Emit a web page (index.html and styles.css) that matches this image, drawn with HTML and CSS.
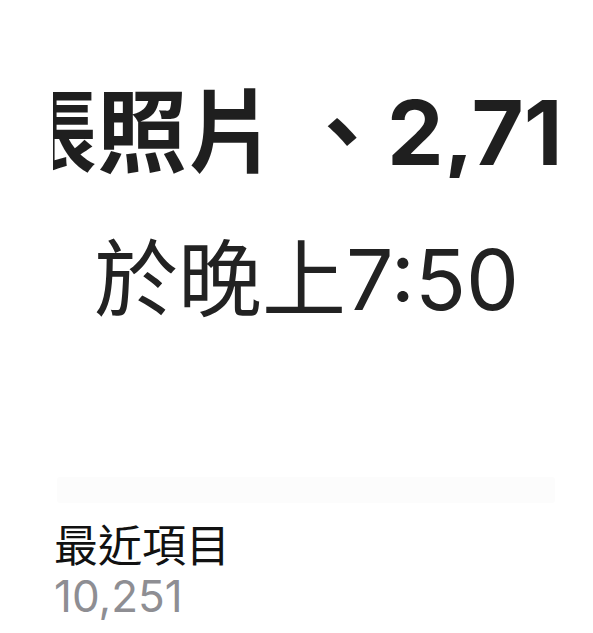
FILE: index.html
```html
<!DOCTYPE html>
<html lang="zh-Hant">
<head>
<meta charset="utf-8">
<link rel="stylesheet" href="styles.css">
</head>
<body>
<div class="page">
  <div class="headline-clip">
    <div class="headline">張照片<span class="comma">、</span>2,71</div>
  </div>
  <div class="time">於晚上7:50</div>
  <div class="shade"></div>
  <div class="album">
    <div class="album-title">最近項目</div>
    <div class="album-count">10,251</div>
  </div>
</div>
</body>
</html>
```

FILE: styles.css
```css
html, body {
  margin: 0;
  padding: 0;
  background: #ffffff;
}

.page {
  width: 593px;
  height: 633px;
  overflow: hidden;
  display: flex;
  flex-direction: column;
  font-family: Inter, "Noto Sans CJK TC", "Noto Sans", sans-serif;
  color: #1c1c1e;
}

.headline-clip {
  margin: 88px 34px 0 53px;
  overflow: hidden;
}

.headline {
  margin-left: -46px;
  white-space: nowrap;
  font-size: 90px;
  line-height: 1;
  font-weight: 700;
  color: #1f1f1f;
}

.comma {
  margin-left: 20px;
}

.time {
  margin-top: 60px;
  padding-left: 94px;
  white-space: nowrap;
  font-size: 84px;
  line-height: 1;
  font-weight: 400;
  color: #222222;
}

.shade {
  margin: 155px 38px 0 57px;
  height: 26px;
  background: #fcfcfc;
  border-radius: 3px;
}

.album {
  margin-top: 21px;
  padding-left: 54px;
  display: flex;
  flex-direction: column;
  gap: 6px;
}

.album-title {
  font-size: 44px;
  line-height: 1;
  color: #111111;
}

.album-count {
  font-size: 44px;
  line-height: 1;
  color: #8e8e93;
}
```
